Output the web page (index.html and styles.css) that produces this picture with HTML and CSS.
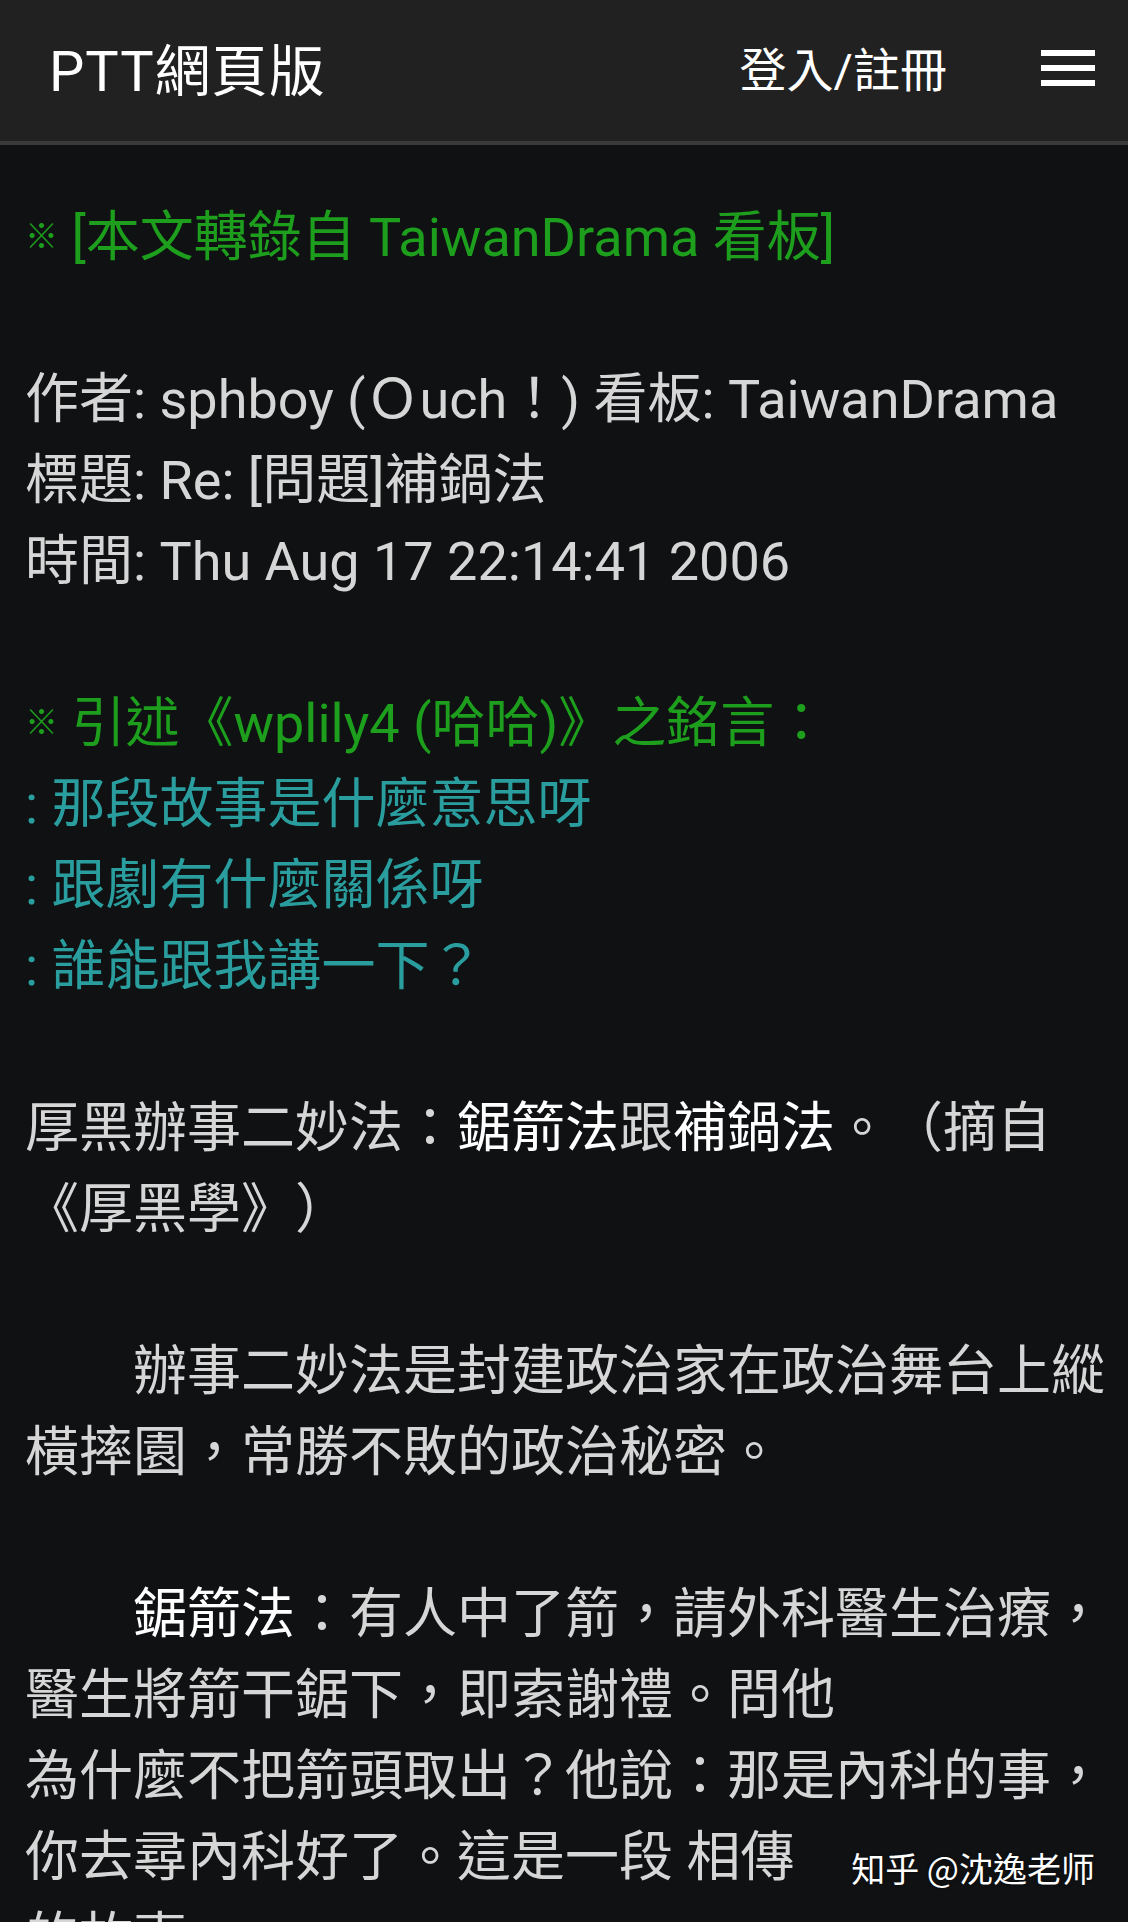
FILE: index.html
```html
<!DOCTYPE html>
<html lang="zh-Hant">
<head>
<meta charset="utf-8">
<title>PTT網頁版</title>
<link rel="stylesheet" href="styles.css">
</head>
<body>
<header class="topbar">
  <div class="brand">PTT網頁版</div>
  <div class="actions">
    <span class="login">登入/註冊</span>
    <span class="menu" aria-label="menu"><i></i><i></i><i></i></span>
  </div>
</header>
<main class="article">
  <div class="line green"><span class="mark">※</span> [本文轉錄自 TaiwanDrama 看板]</div>
  <div class="line blank">&nbsp;</div>
  <div class="line">作者: sphboy (Ｏuch！) 看板: TaiwanDrama</div>
  <div class="line">標題: Re: [問題]補鍋法</div>
  <div class="line">時間: Thu Aug 17 22:14:41 2006</div>
  <div class="line blank">&nbsp;</div>
  <div class="line green"><span class="mark">※</span> 引述《wplily4 (哈哈)》之銘言：</div>
  <div class="line cyan">: 那段故事是什麼意思呀</div>
  <div class="line cyan">: 跟劇有什麼關係呀</div>
  <div class="line cyan">: 誰能跟我講一下？</div>
  <div class="line blank">&nbsp;</div>
  <div class="line">厚黑辦事二妙法：<b>鋸箭法</b>跟<b>補鍋法</b>。（摘自</div>
  <div class="line">《厚黑學》）</div>
  <div class="line blank">&nbsp;</div>
  <div class="line">　　辦事二妙法是封建政治家在政治舞台上縱</div>
  <div class="line">橫摔園，常勝不敗的政治秘密。</div>
  <div class="line blank">&nbsp;</div>
  <div class="line">　　<b>鋸箭法</b>：有人中了箭，請外科醫生治療，</div>
  <div class="line">醫生將箭干鋸下，即索謝禮。問他</div>
  <div class="line">為什麼不把箭頭取出？他說：那是內科的事，</div>
  <div class="line">你去尋內科好了。這是一段 相傳</div>
  <div class="line">的故事</div>
</main>
<div class="watermark">知乎 @沈逸老师</div>
</body>
</html>
```
FILE: styles.css
```css
html, body {
  margin: 0;
  padding: 0;
  background: #0f1113;
}
body {
  width: 1128px;
  height: 1922px;
  overflow: hidden;
  position: relative;
  font-family: Roboto, "Noto Sans CJK TC", sans-serif;
  text-spacing-trim: space-all;
}
.topbar {
  background: #212121;
  border-bottom: 4px solid #3a3a3a;
  display: flex;
  align-items: center;
  justify-content: space-between;
  padding: 0 33px 8px 49px;
  box-sizing: border-box;
  height: 145px;
}
.brand {
  color: #ffffff;
  font-size: 56px;
  font-family: Roboto, "Noto Sans CJK TC", sans-serif;
  letter-spacing: 1px;
}
.actions {
  display: flex;
  align-items: center;
  gap: 94px;
}
.login {
  color: #ffffff;
  font-size: 47px;
  font-family: Roboto, "Noto Sans CJK TC", sans-serif;
}
.menu {
  display: flex;
  flex-direction: column;
  gap: 9px;
  width: 54px;
  margin-top: 2px;
}
.menu i {
  display: block;
  height: 6px;
  background: #ffffff;
}
.article {
  padding: 52px 20px 0 25px;
  color: #d6d6d6;
  font-size: 54px;
  line-height: 81px;
}
.line {
  white-space: nowrap;
}
.line b {
  font-weight: 400;
  color: #ffffff;
}
.mark {
  font-size: 33px;
  font-weight: 700;
  vertical-align: 0.24em;
  line-height: 1;
}
.green {
  color: #1d9e1d;
}
.cyan {
  color: #2a9e9e;
}
.watermark {
  position: absolute;
  right: 33px;
  top: 1845px;
  color: #ffffff;
  font-size: 34px;
  line-height: 46px;
  font-family: "Noto Sans CJK SC", sans-serif;
  text-shadow: 0 0 3px rgba(0,0,0,0.6);
}
```
